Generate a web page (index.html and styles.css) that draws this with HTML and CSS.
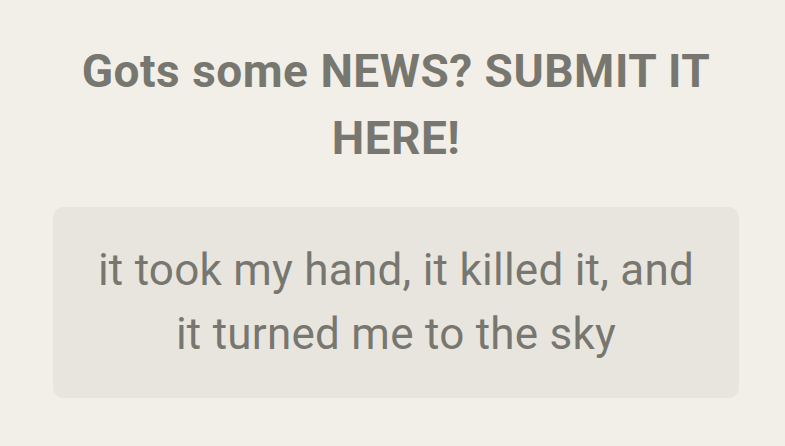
FILE: index.html
```html
<!DOCTYPE html>
<html>
  <head>
    <meta http-equiv="content-type" content="text/html; charset=UTF-8">
    <title>Submit news</title>
    <link rel="stylesheet" href="styles.css">
  </head>
<body>
  <div class="page">
    <h2 class="title">Gots some NEWS? SUBMIT IT HERE!</h2>
    <div class="quote">
      <p>it took my hand, it killed it, and it turned me to the sky</p>
    </div>
  </div>
</body>
</html>
```

FILE: styles.css
```css
html {
  background: #f2efe9;
}

body {
  margin: 0;
  font-family: Roboto, "Noto Sans", sans-serif;
  color: #77776f;
}

.page {
  padding: 38px 46px 0 53px;
}

.title {
  margin: 0 auto;
  width: 660px;
  text-align: center;
  font-size: 46px;
  font-weight: bold;
  letter-spacing: 0.5px;
  line-height: 67px;
}

.quote {
  margin-top: 35px;
  padding: 31px 40px 32px 40px;
  background: #e8e5df;
  border-radius: 10px;
  text-align: center;
}

.quote p {
  margin: 0;
  font-size: 44px;
  letter-spacing: 0.25px;
  line-height: 64px;
}
```
